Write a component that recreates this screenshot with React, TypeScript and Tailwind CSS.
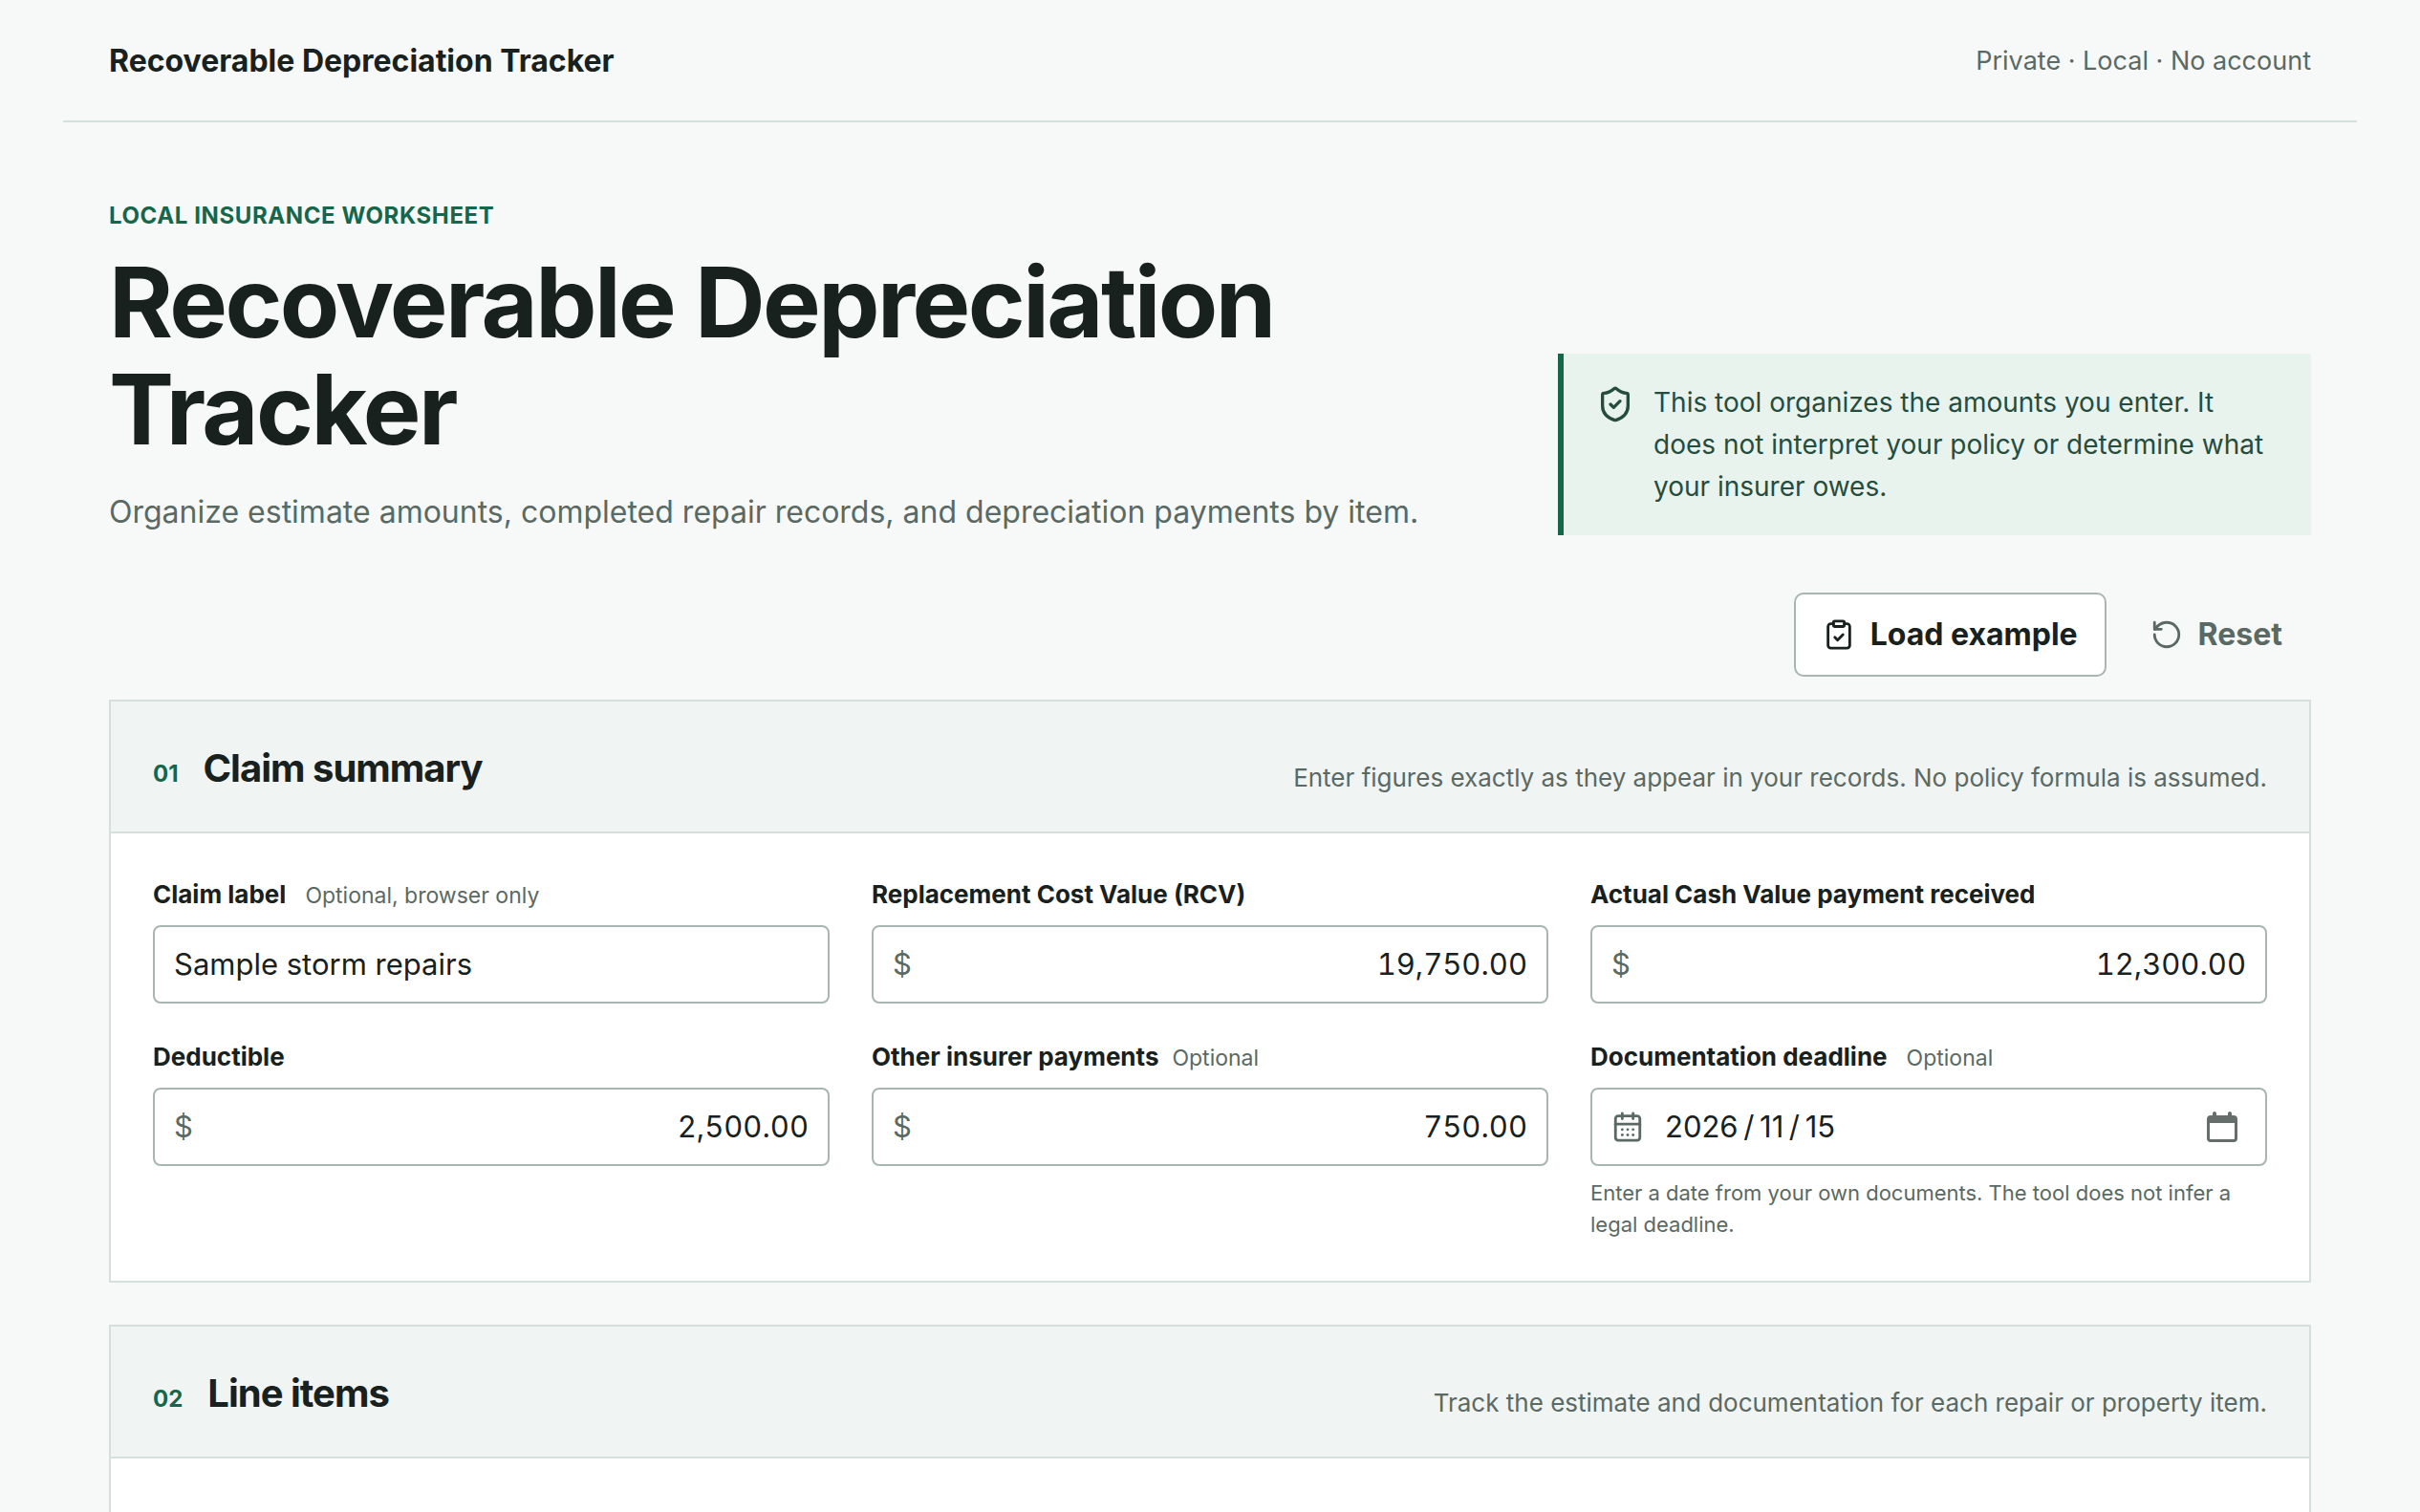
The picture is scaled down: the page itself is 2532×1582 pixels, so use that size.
import React from "react";
import { ClipboardCheck, RotateCcw, ShieldCheck, CalendarDays } from "lucide-react";

const moneyFields = {
  rcv: { id: "rcv", label: "Replacement Cost Value (RCV)", value: "19,750.00" },
  acv: { id: "acv", label: "Actual Cash Value payment received", value: "12,300.00" },
  deductible: { id: "deductible", label: "Deductible", value: "2,500.00" },
  other: { id: "other", label: "Other insurer payments", hint: "Optional", value: "750.00" },
};

function FieldLabel({ id, label, hint, wide = false }: { id: string; label: string; hint?: string; wide?: boolean }) {
  return (
    <label
      htmlFor={id}
      className={
        wide
          ? "flex h-10 items-baseline gap-5 text-[26px] leading-10 font-bold"
          : "flex h-10 items-baseline gap-3.5 text-[26px] leading-10 font-bold"
      }
    >
      {label}
      {hint && <span className="text-[23px] font-normal text-[#5a6963]">{hint}</span>}
    </label>
  );
}

const frame = "flex h-[82px] items-center rounded-lg border-2 border-[#a8b5b0] bg-white px-5 text-[31px]";

function MoneyField({ id, label, hint, value }: { id: string; label: string; hint?: string; value: string }) {
  return (
    <div className="flex flex-col gap-3">
      <FieldLabel id={id} label={label} hint={hint} />
      <div className={frame}>
        <span className="text-[#5a6963]">$</span>
        <input id={id} defaultValue={value} inputMode="decimal" className="min-w-0 flex-1 bg-transparent text-right tabular-nums outline-none" />
      </div>
    </div>
  );
}

function SectionHeader({ number, title, note }: { number: string; title: string; note: string }) {
  return (
    <header className="flex items-end justify-between border-b-2 border-[#d5dfdb] bg-[#f0f4f3] px-11 pt-11 pb-9">
      <div className="flex items-baseline gap-[26px] pb-1">
        <span className="text-2xl leading-none font-bold text-[#16664b]">{number}</span>
        <h2 className="text-[40px] leading-[52px] font-bold tracking-tight">{title}</h2>
      </div>
      <p className="text-[26px] leading-10 text-[#5a6963]">{note}</p>
    </header>
  );
}

export default function App() {
  return (
    <div className="flex min-h-screen flex-col bg-[#f7f9f8] px-[66px] font-['Inter',sans-serif] text-[#18211e]">
      <header className="flex h-32 items-center justify-between border-b-2 border-[#d5dfdb] px-12 pt-0.5">
        <strong className="text-[32px] font-bold">Recoverable Depreciation Tracker</strong>
        <span className="text-[27px] text-[#5a6963]">Private · Local · No account</span>
      </header>
      <main className="flex flex-1 flex-col px-12">
        <div className="flex items-end justify-between gap-16 pt-20">
          <div className="flex-1">
            <p className="text-2xl leading-9 font-bold tracking-wide text-[#16664b]">LOCAL INSURANCE WORKSHEET</p>
            <h1 className="mt-4 text-[102px] leading-[112px] font-bold tracking-tight">
              Recoverable Depreciation Tracker
            </h1>
            <p className="mt-7 text-[32px] leading-[48px] text-[#5a6963]">
              Organize estimate amounts, completed repair records, and depreciation payments by item.
            </p>
          </div>
          <aside className="flex w-[788px] gap-5 border-l-6 border-[#16664b] bg-[#e9f3ee] py-[29px] pr-9 pl-[34px] text-[#264c3e]">
            <ShieldCheck size={40} strokeWidth={2} className="mt-1 shrink-0" />
            <p className="text-[28px] leading-[44px]">
              This tool organizes the amounts you enter. It does not interpret your policy or determine what your insurer owes.
            </p>
          </aside>
        </div>

        <div className="flex justify-end gap-4 pt-[60px] pb-6 text-[32px] font-bold">
          <button type="button" className="flex h-[88px] items-center gap-4 rounded-[10px] border-2 border-[#a8b5b0] bg-white px-7">
            <ClipboardCheck size={34} />
            Load example
          </button>
          <button type="button" className="flex h-[88px] items-center gap-4 px-[30px] text-[#5a6963]">
            <RotateCcw size={34} />
            Reset
          </button>
        </div>

        <section className="border-2 border-[#d5dfdb] bg-white">
          <SectionHeader number="01" title="Claim summary" note="Enter figures exactly as they appear in your records. No policy formula is assumed." />
          <div className="grid grid-cols-3 gap-x-11 gap-y-9 px-11 pt-11 pb-[42px]">
            <div className="flex flex-col gap-3">
              <FieldLabel id="claim" label="Claim label" hint="Optional, browser only" wide />
              <div className={frame}>
                <input id="claim" defaultValue="Sample storm repairs" className="min-w-0 flex-1 bg-transparent outline-none" />
              </div>
            </div>
            <MoneyField {...moneyFields.rcv} />
            <MoneyField {...moneyFields.acv} />
            <MoneyField {...moneyFields.deductible} />
            <MoneyField {...moneyFields.other} />
            <div className="flex flex-col gap-3">
              <FieldLabel id="deadline" label="Documentation deadline" hint="Optional" wide />
              <div className={frame}>
                <CalendarDays size={34} className="shrink-0 text-[#5a6963]" />
                <input id="deadline" defaultValue={"2026\u2009/\u200911\u2009/\u200915"} className="ml-[22px] min-w-0 flex-1 bg-transparent outline-none" />
                <button type="button" aria-label="Open date picker" className="mr-2">
                  <svg viewBox="0 0 34 32" className="h-8 w-[34px] fill-[#666e6b]">
                    <path
                      fillRule="evenodd"
                      d="M7 4V2a2 2 0 0 1 4 0v2h12V2a2 2 0 0 1 4 0v2h2a4 4 0 0 1 4 4v20a4 4 0 0 1-4 4H5a4 4 0 0 1-4-4V8a4 4 0 0 1 4-4zM4 12v16a1 1 0 0 0 1 1h24a1 1 0 0 0 1-1V12z"
                    />
                  </svg>
                </button>
              </div>
              <p className="text-[22px] leading-[33px] text-[#5a6963]">
                Enter a date from your own documents. The tool does not infer a legal deadline.
              </p>
            </div>
          </div>
        </section>

        <section className="mt-11 flex-1 border-2 border-b-0 border-[#d5dfdb] bg-white">
          <SectionHeader number="02" title="Line items" note="Track the estimate and documentation for each repair or property item." />
        </section>
      </main>
    </div>
  );
}
